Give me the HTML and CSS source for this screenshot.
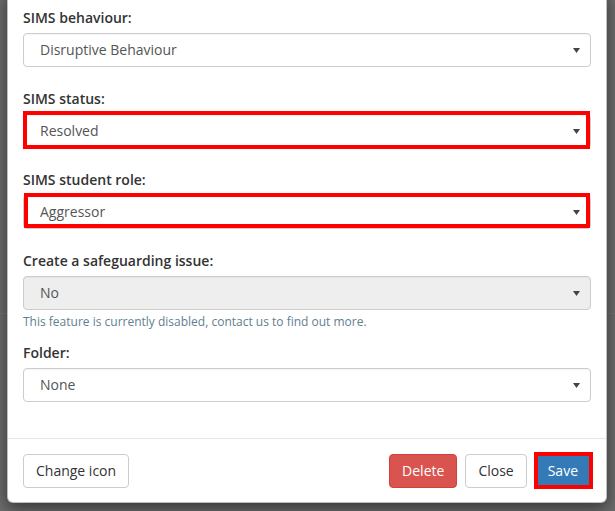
FILE: index.html
```html
<!DOCTYPE html>
<html>
<head>
<meta charset="utf-8">
<link rel="stylesheet" href="styles.css">
</head>
<body>
<div class="backdrop-line"></div>
<div class="modal">
  <div class="modal-body">
    <div class="form-group">
      <label class="label">SIMS behaviour:</label>
      <div class="select"><span>Disruptive Behaviour</span><svg class="caret" width="7" height="5" viewBox="0 0 7 5"><path d="M0 0H7L3.5 5Z"/></svg></div>
    </div>
    <div class="form-group">
      <label class="label">SIMS status:</label>
      <div class="select mark mark-a"><span>Resolved</span><svg class="caret" width="7" height="5" viewBox="0 0 7 5"><path d="M0 0H7L3.5 5Z"/></svg></div>
    </div>
    <div class="form-group">
      <label class="label">SIMS student role:</label>
      <div class="select mark mark-b"><span>Aggressor</span><svg class="caret" width="7" height="5" viewBox="0 0 7 5"><path d="M0 0H7L3.5 5Z"/></svg></div>
    </div>
    <div class="form-group with-help">
      <label class="label">Create a safeguarding issue:</label>
      <div class="select disabled"><span>No</span><svg class="caret" width="7" height="5" viewBox="0 0 7 5"><path d="M0 0H7L3.5 5Z"/></svg></div>
      <p class="help">This feature is currently disabled, contact us to find out more.</p>
    </div>
    <div class="form-group last">
      <label class="label">Folder:</label>
      <div class="select"><span>None</span><svg class="caret" width="7" height="5" viewBox="0 0 7 5"><path d="M0 0H7L3.5 5Z"/></svg></div>
    </div>
  </div>
  <div class="modal-footer">
    <button class="btn btn-default">Change icon</button>
    <div class="btn-group">
      <button class="btn btn-danger">Delete</button>
      <button class="btn btn-default">Close</button>
      <button class="btn btn-primary mark-save">Save</button>
    </div>
  </div>
</div>
</body>
</html>
```
FILE: styles.css
```css
html, body {
  margin: 0;
  padding: 0;
}
body {
  width: 615px;
  height: 511px;
  overflow: hidden;
  background: #6b6b6b;
  font-family: "Open Sans", "Liberation Sans", sans-serif;
  font-size: 14px;
  color: #333;
  position: relative;
}
.backdrop-line {
  position: absolute;
  left: 0;
  right: 0;
  top: 313px;
  height: 1px;
  background: #737373;
}
.modal {
  position: relative;
  width: 598px;
  margin: -8px 0 0 7px;
  background: #fff;
  border: 1px solid rgba(0, 0, 0, 0.25);
  border-radius: 0 0 6px 6px;
  box-shadow: 0 5px 15px rgba(0, 0, 0, 0.5);
}
.modal-body {
  padding: 15px 15px 15px 15px;
}
.form-group {
  margin-bottom: 22px;
}
.form-group.with-help {
  margin-bottom: 13px;
}
.form-group.last {
  margin-bottom: 21px;
}
.label {
  display: block;
  font-weight: 600;
  line-height: 20px;
  margin-bottom: 5px;
  color: #333;
}
.select {
  position: relative;
  box-sizing: border-box;
  height: 34px;
  border: 1px solid #ccc;
  border-radius: 4px;
  background: #fff;
  padding: 0 10px 0 16px;
  display: flex;
  align-items: center;
  justify-content: space-between;
  color: #555;
  line-height: 20px;
  box-shadow: inset 0 1px 1px rgba(0, 0, 0, 0.04);
}
.select.disabled {
  background: #eee;
}
.caret {
  fill: #444;
}
.mark::after {
  content: "";
  position: absolute;
  border: 4px solid #ff0000;
  pointer-events: none;
}
.mark-a::after {
  top: -4px;
  bottom: -2px;
  left: -1px;
  right: 0px;
}
.mark-b::after {
  top: -3px;
  bottom: 0px;
  left: 0px;
  right: 0px;
}
.help {
  margin: 3px 0 0 0;
  font-size: 12px;
  line-height: 17px;
  color: #62808f;
}
.modal-footer {
  border-top: 1px solid #e5e5e5;
  padding: 15px 15px 14px 15px;
  display: flex;
  justify-content: space-between;
  align-items: center;
}
.btn-group {
  display: flex;
  gap: 8px;
}
.btn {
  font-family: "Open Sans", "Liberation Sans", sans-serif;
  font-size: 14px;
  line-height: 20px;
  height: 34px;
  padding: 6px 12px;
  border: 1px solid transparent;
  border-radius: 4px;
  box-sizing: border-box;
  margin: 0;
}
.btn-default {
  background: #fff;
  border-color: #ccc;
  color: #333;
}
.btn-danger {
  background: #d9534f;
  border-color: #d43f3a;
  color: #fff;
}
.btn-primary {
  background: #337ab7;
  border-color: #2e6da4;
  color: #fff;
}
.mark-save {
  position: relative;
}
.mark-save::after {
  content: "";
  position: absolute;
  top: -3px;
  bottom: -2px;
  left: -2px;
  right: -3px;
  border: 4px solid #ff0000;
}
```
